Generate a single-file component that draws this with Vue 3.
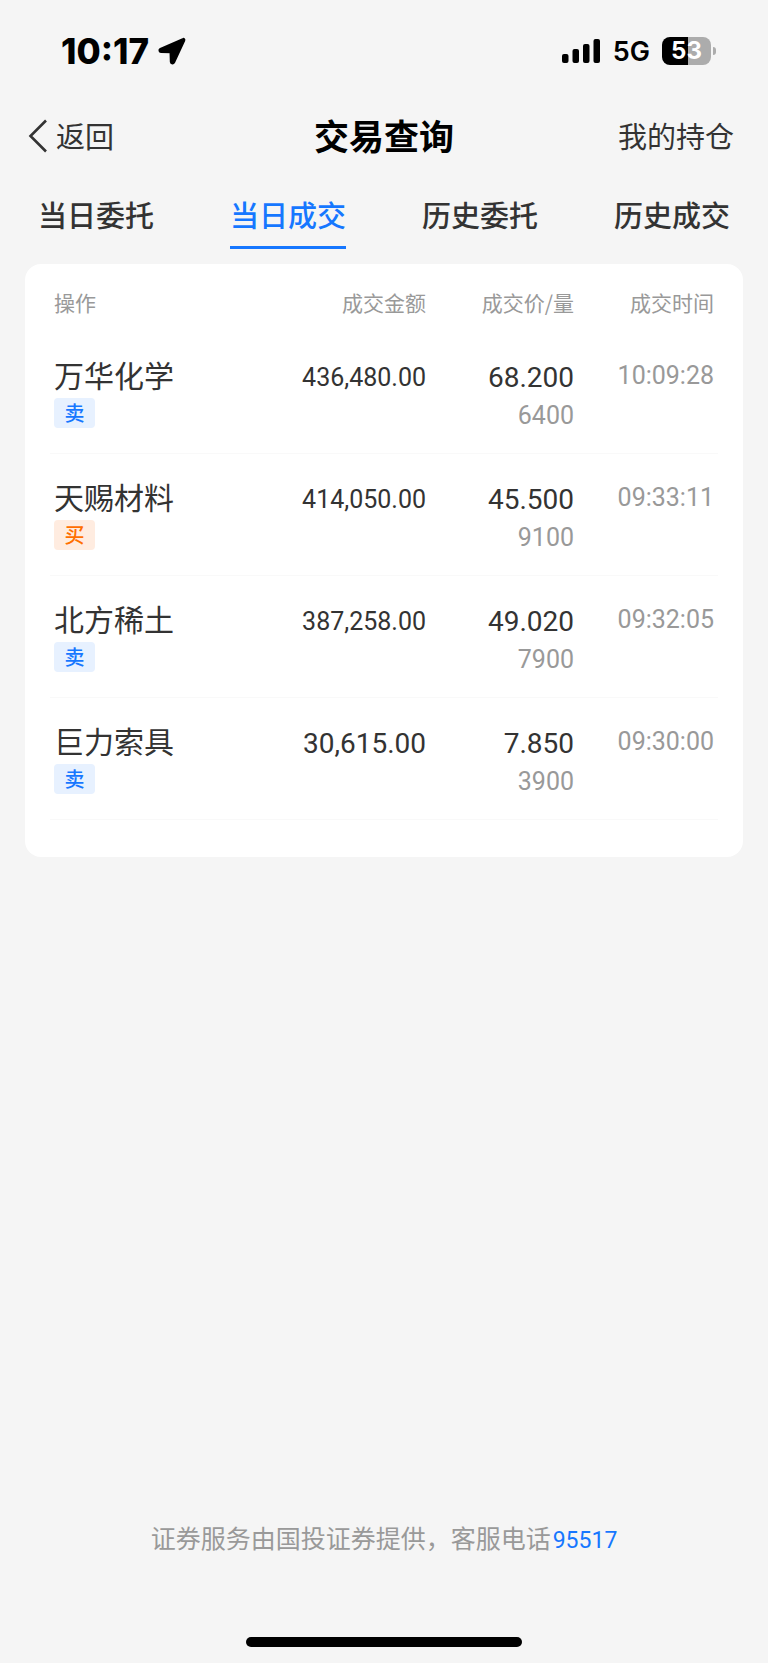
<template>
  <div class="trade-query">
    <!-- 状态栏 -->
    <div class="status-bar">
      <div class="status-left">
        <span class="clock">10:17</span>
        <svg class="location" viewBox="0 0 28 28" width="28" height="28" aria-hidden="true">
          <path d="M25 2.500 2.600 12.400c-1.100.6-.8 1.900.5 2l9.900.4.3 10c.2 1.400 1.800 1.500 2.400.3L25.800 3.400c.3-.7-.2-1.200-.8-.9z" fill="#000" stroke="#000" stroke-width="3" stroke-linejoin="round" />
        </svg>
      </div>
      <div class="status-right">
        <svg class="signal" viewBox="0 0 39 24" width="39" height="24" aria-hidden="true">
          <rect x="0" y="15" width="6.500" height="9" rx="2" />
          <rect x="10.500" y="10" width="6.500" height="14" rx="2" />
          <rect x="21" y="5" width="6.500" height="19" rx="2" />
          <rect x="31.500" y="0" width="6.500" height="24" rx="2" />
        </svg>
        <span class="network">5G</span>
        <span class="battery">53</span>
        <span class="battery-cap"></span>
      </div>
    </div>

    <!-- 导航栏 -->
    <header class="nav-bar">
      <button class="back-btn" @click="goBack">
        <svg viewBox="0 0 20 34" width="20" height="34" aria-hidden="true">
          <path d="M18 1.500 2.500 17 18 32.500" fill="none" stroke="#333" stroke-width="2.600" />
        </svg>
        <span>返回</span>
      </button>
      <h1>交易查询</h1>
      <button class="position-btn">我的持仓</button>
    </header>

    <!-- 标签页 -->
    <nav class="tabs">
      <button
        v-for="tab in tabs"
        :key="tab"
        :class="{ active: currentTab === tab }"
        @click="currentTab = tab"
      >{{ tab }}</button>
    </nav>

    <!-- 成交列表 -->
    <main class="card">
      <table class="deal-table">
        <thead>
          <tr>
            <th class="col-name">操作</th>
            <th class="col-amount">成交金额</th>
            <th class="col-price">成交价/量</th>
            <th class="col-time">成交时间</th>
          </tr>
        </thead>
        <tbody>
          <tr v-for="deal in deals" :key="deal.name">
            <td>
              <div class="name">{{ deal.name }}</div>
              <span class="badge" :class="deal.type === '买' ? 'buy' : 'sell'">{{ deal.type }}</span>
            </td>
            <td class="amount" :class="{ large: deal.amount.length < 10 }">{{ deal.amount }}</td>
            <td>
              <div class="price">{{ deal.price }}</div>
              <div class="count">{{ deal.count }}</div>
            </td>
            <td class="time">{{ deal.time }}</td>
          </tr>
        </tbody>
      </table>
    </main>

    <!-- 底部说明 -->
    <footer class="footer">
      <p>证券服务由国投证券提供，客服电话<a href="tel:95517">95517</a></p>
      <div class="home-indicator"></div>
    </footer>
  </div>
</template>

<script setup>
import { ref } from 'vue';

const tabs = ['当日委托', '当日成交', '历史委托', '历史成交'];
const currentTab = ref('当日成交');

const deals = ref([
  {
    name: '万华化学',
    type: '卖',
    amount: '436,480.00',
    price: '68.200',
    count: '6400',
    time: '10:09:28'
  },
  {
    name: '天赐材料',
    type: '买',
    amount: '414,050.00',
    price: '45.500',
    count: '9100',
    time: '09:33:11'
  },
  {
    name: '北方稀土',
    type: '卖',
    amount: '387,258.00',
    price: '49.020',
    count: '7900',
    time: '09:32:05'
  },
  {
    name: '巨力索具',
    type: '卖',
    amount: '30,615.00',
    price: '7.850',
    count: '3900',
    time: '09:30:00'
  }
]);

const goBack = () => {
  window.history.back();
};
</script>

<style>
body {
  background-color: #f5f5f5;
}
</style>

<style scoped>
.trade-query {
  display: flex;
  flex-direction: column;
  min-height: 100vh;
  background-color: #f5f5f5;
  color: #333;
  font-family: "Noto Sans CJK SC", sans-serif;
}

button {
  padding: 0;
  border: none;
  background: none;
  color: inherit;
  font-family: inherit;
  font-size: 29px;
  cursor: pointer;
}

.status-bar {
  display: flex;
  justify-content: space-between;
  align-items: center;
  height: 102px;
  padding: 0 52px 0 61px;
  box-sizing: border-box;
  color: #000;
  font-family: Inter, sans-serif;
}

.status-left,
.status-right {
  display: flex;
  align-items: center;
}

.clock {
  font-size: 35px;
  font-weight: 800;
}

.location {
  margin-left: 9px;
}

.network {
  margin: 0 12px;
  font-size: 27px;
  font-weight: 600;
}

.battery {
  width: 49px;
  height: 28px;
  border-radius: 8px;
  background: linear-gradient(to right, #000 53%, #acacac 53%);
  color: #fff;
  font-size: 24px;
  font-weight: 700;
  line-height: 28px;
  text-align: center;
}

.battery-cap {
  width: 3px;
  height: 8px;
  margin-left: 2px;
  border-radius: 0 4px 4px 0;
  background-color: #acacac;
}

.nav-bar {
  display: grid;
  grid-template-columns: 1fr auto 1fr;
  align-items: center;
  height: 68px;
  padding: 0 28px;
}

.nav-bar h1,
.back-btn span,
.position-btn {
  padding-bottom: 3px;
  line-height: 40px;
}

.nav-bar h1 {
  margin: 0;
  color: #000;
  font-size: 35px;
  font-weight: 700;
}

.back-btn {
  display: flex;
  align-items: center;
  gap: 8px;
}

.position-btn {
  justify-self: end;
  padding-right: 6px;
}

.tabs {
  display: grid;
  grid-template-columns: repeat(4, 1fr);
  justify-items: center;
  padding: 24px 0 15px;
}

.tabs button {
  padding-bottom: 12px;
  border-bottom: 3px solid transparent;
  font-weight: 500;
  line-height: 40px;
}

.tabs button.active {
  border-bottom-color: #1677ff;
  color: #1677ff;
}

.card {
  margin: 0 25px;
  padding: 0 25px 37px;
  border-radius: 16px;
  background-color: #fff;
}

.deal-table {
  width: 100%;
  table-layout: fixed;
  border-collapse: collapse;
}

.deal-table th {
  padding: 23px 4px 14px;
  color: #999;
  font-size: 21px;
  font-weight: 400;
  line-height: 31px;
  text-align: right;
}

.deal-table td {
  padding: 26px 4px 19px;
  border-bottom: 1px solid #f9f9f9;
  font-family: Roboto, "Noto Sans CJK SC", sans-serif;
  text-align: right;
  vertical-align: top;
}

.deal-table th:first-child,
.deal-table td:first-child {
  text-align: left;
}

.col-amount {
  width: 170px;
}

.col-price {
  width: 140px;
}

.col-time {
  width: 132px;
}

.name {
  margin-bottom: 8px;
  font-family: "Noto Sans CJK SC", sans-serif;
  font-size: 30px;
  line-height: 32px;
}

.badge {
  display: block;
  width: 41px;
  border-radius: 4px;
  font-family: "Noto Sans CJK SC", sans-serif;
  font-size: 20px;
  font-weight: 500;
  line-height: 30px;
  text-align: center;
}

.badge.sell {
  background-color: #e7f1ff;
  color: #1677ff;
}

.badge.buy {
  background-color: #ffece0;
  color: #ff6f00;
}

.amount {
  font-size: 25px;
  line-height: 40px;
}

.amount.large,
.price {
  font-size: 28px;
  line-height: 40px;
}

.count {
  color: #999;
  font-size: 25px;
  line-height: 36px;
}

.time {
  color: #999;
  font-size: 25px;
  line-height: 36px;
}

.footer {
  margin-top: auto;
  padding-bottom: 16px;
  text-align: center;
}

.footer p {
  margin: 0 0 78px;
  color: #999;
  font-size: 25px;
  line-height: 36px;
}

.footer a {
  margin-left: 2px;
  color: #1677ff;
  font-family: Roboto, sans-serif;
  font-size: 23px;
  text-decoration: none;
}

.home-indicator {
  width: 36%;
  height: 10px;
  margin: 0 auto;
  border-radius: 5px;
  background-color: #000;
}
</style>
